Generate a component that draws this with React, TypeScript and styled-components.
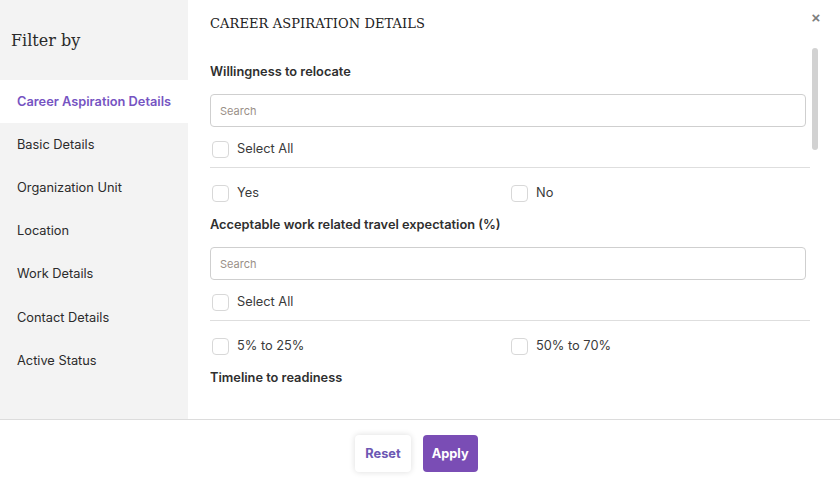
import React from 'react';
import styled, { createGlobalStyle } from 'styled-components';

const GlobalStyle = createGlobalStyle`
  html, body {
    margin: 0;
    padding: 0;
    background: #ffffff;
  }
  * {
    box-sizing: border-box;
  }
`;

const SANS = `Inter, "Noto Sans", Roboto, sans-serif`;
const SERIF = `"DejaVu Serif", "Liberation Serif", serif`;

const Modal = styled.div`
  width: 840px;
  height: 485px;
  display: flex;
  flex-direction: column;
  background: #fff;
  font-family: ${SANS};
  color: #333;
`;

const Body = styled.div`
  display: flex;
  height: 420px;
  border-bottom: 1px solid #dcdcdc;
`;

const Sidebar = styled.nav`
  width: 188px;
  flex-shrink: 0;
  background: #f3f3f3;
  display: flex;
  flex-direction: column;
`;

const SidebarTitle = styled.h2`
  margin: 0;
  height: 79.5px;
  padding: 31px 0 0 11px;
  font-family: ${SERIF};
  font-weight: 400;
  font-size: 16px;
  color: #2a2a2a;
`;

const NavItem = styled.div<{ $active?: boolean }>`
  height: 43.2px;
  display: flex;
  align-items: center;
  padding-left: 17px;
  font-size: 12.8px;
  font-weight: ${(p) => (p.$active ? 600 : 400)};
  color: ${(p) => (p.$active ? '#7654c2' : '#2b2b2b')};
  background: ${(p) => (p.$active ? '#ffffff' : 'transparent')};
`;

const Main = styled.section`
  flex: 1;
  position: relative;
  display: flex;
  flex-direction: column;
  padding: 0 22px 26px 22px;
  min-width: 0;
`;

const Title = styled.h1`
  margin: 0;
  height: 48px;
  padding-top: 16px;
  font-family: ${SERIF};
  font-weight: 400;
  font-size: 13px;
  letter-spacing: 0.1px;
  color: #222;
`;

const CloseButton = styled.button`
  position: absolute;
  top: 10px;
  right: 18px;
  border: none;
  background: transparent;
  padding: 0;
  width: 12px;
  height: 16px;
  font-size: 15px;
  font-weight: 700;
  color: #7d7d7d;
  cursor: pointer;
  line-height: 16px;
`;

const ScrollArea = styled.div`
  flex: 1;
  overflow-y: auto;
  scrollbar-width: none;
  padding: 15px 8px 0 0;

  &::-webkit-scrollbar {
    display: none;
  }
`;

const ScrollThumb = styled.div`
  position: absolute;
  top: 48px;
  right: 22px;
  width: 6px;
  height: 102px;
  border-radius: 3px;
  background: #d2d2d2;
`;

const Section = styled.div`
  padding-bottom: 14px;
`;

const SectionLabel = styled.div`
  font-size: 12.8px;
  font-weight: 600;
  line-height: 18px;
  color: #2f2f2f;
  margin-bottom: 13px;
`;

const SearchInput = styled.input`
  display: block;
  width: calc(100% - 4px);
  height: 33px;
  border: 1px solid #cfcfcf;
  border-radius: 4px;
  padding: 0 9px;
  font-family: ${SANS};
  font-size: 11px;
  color: #333;
  outline: none;

  &::placeholder {
    color: #9a8f88;
  }
`;

const SelectAllRow = styled.label`
  display: flex;
  align-items: center;
  gap: 8px;
  height: 18px;
  margin: 13px 0 9px 2px;
  font-size: 12.8px;
  color: #3a3a3a;
`;

const Divider = styled.hr`
  margin: 0;
  border: none;
  border-top: 1px solid #dedede;
`;

const OptionGrid = styled.div`
  display: grid;
  grid-template-columns: 299px 1fr;
  row-gap: 14px;
  margin-top: 16px;
  padding-left: 2px;
`;

const Option = styled.label`
  display: flex;
  align-items: center;
  gap: 8px;
  height: 18px;
  font-size: 12.8px;
  color: #3a3a3a;
`;

const OptionText = styled.span`
  margin-top: -2px;
`;

const Box = styled.span`
  width: 17px;
  height: 17px;
  border: 1px solid #d8d8d8;
  border-radius: 4px;
  background: #fff;
  flex-shrink: 0;
`;

const Footer = styled.footer`
  flex: 1;
  display: flex;
  align-items: center;
  justify-content: center;
  gap: 12px;
  padding: 2px 7px 0 0;
`;

const Button = styled.button<{ $primary?: boolean }>`
  height: 37px;
  padding: 0 ${(p) => (p.$primary ? '9px' : '10px')};
  border: none;
  border-radius: 4px;
  font-family: ${SANS};
  font-size: 12.8px;
  font-weight: 700;
  cursor: pointer;
  background: ${(p) => (p.$primary ? '#7a4db5' : '#ffffff')};
  color: ${(p) => (p.$primary ? '#ffffff' : '#6c58b3')};
  box-shadow: ${(p) => (p.$primary ? 'none' : '0 0 6px rgba(0, 0, 0, 0.14)')};
`;

const navItems = [
  'Career Aspiration Details',
  'Basic Details',
  'Organization Unit',
  'Location',
  'Work Details',
  'Contact Details',
  'Active Status',
];

const sections = [
  { label: 'Willingness to relocate', options: ['Yes', 'No'] },
  { label: 'Acceptable work related travel expectation (%)', options: ['5% to 25%', '50% to 70%'] },
  { label: 'Timeline to readiness', options: ['Ready now', '1 to 2 years'] },
];

const FilterSection: React.FC<{ label: string; options: string[] }> = ({ label, options }) => (
  <Section>
    <SectionLabel>{label}</SectionLabel>
    <SearchInput placeholder="Search" />
    <SelectAllRow>
      <Box />
      <OptionText>Select All</OptionText>
    </SelectAllRow>
    <Divider />
    <OptionGrid>
      {options.map((o) => (
        <Option key={o}>
          <Box />
          <OptionText>{o}</OptionText>
        </Option>
      ))}
    </OptionGrid>
  </Section>
);

const App: React.FC = () => {
  return (
    <>
      <GlobalStyle />
      <Modal>
        <Body>
          <Sidebar>
            <SidebarTitle>Filter by</SidebarTitle>
            {navItems.map((item, i) => (
              <NavItem key={item} $active={i === 0}>
                {item}
              </NavItem>
            ))}
          </Sidebar>
          <Main>
            <Title>CAREER ASPIRATION DETAILS</Title>
            <CloseButton aria-label="Close">×</CloseButton>
            <ScrollArea>
              {sections.map((s) => (
                <FilterSection key={s.label} label={s.label} options={s.options} />
              ))}
            </ScrollArea>
            <ScrollThumb />
          </Main>
        </Body>
        <Footer>
          <Button>Reset</Button>
          <Button $primary>Apply</Button>
        </Footer>
      </Modal>
    </>
  );
};

export default App;
